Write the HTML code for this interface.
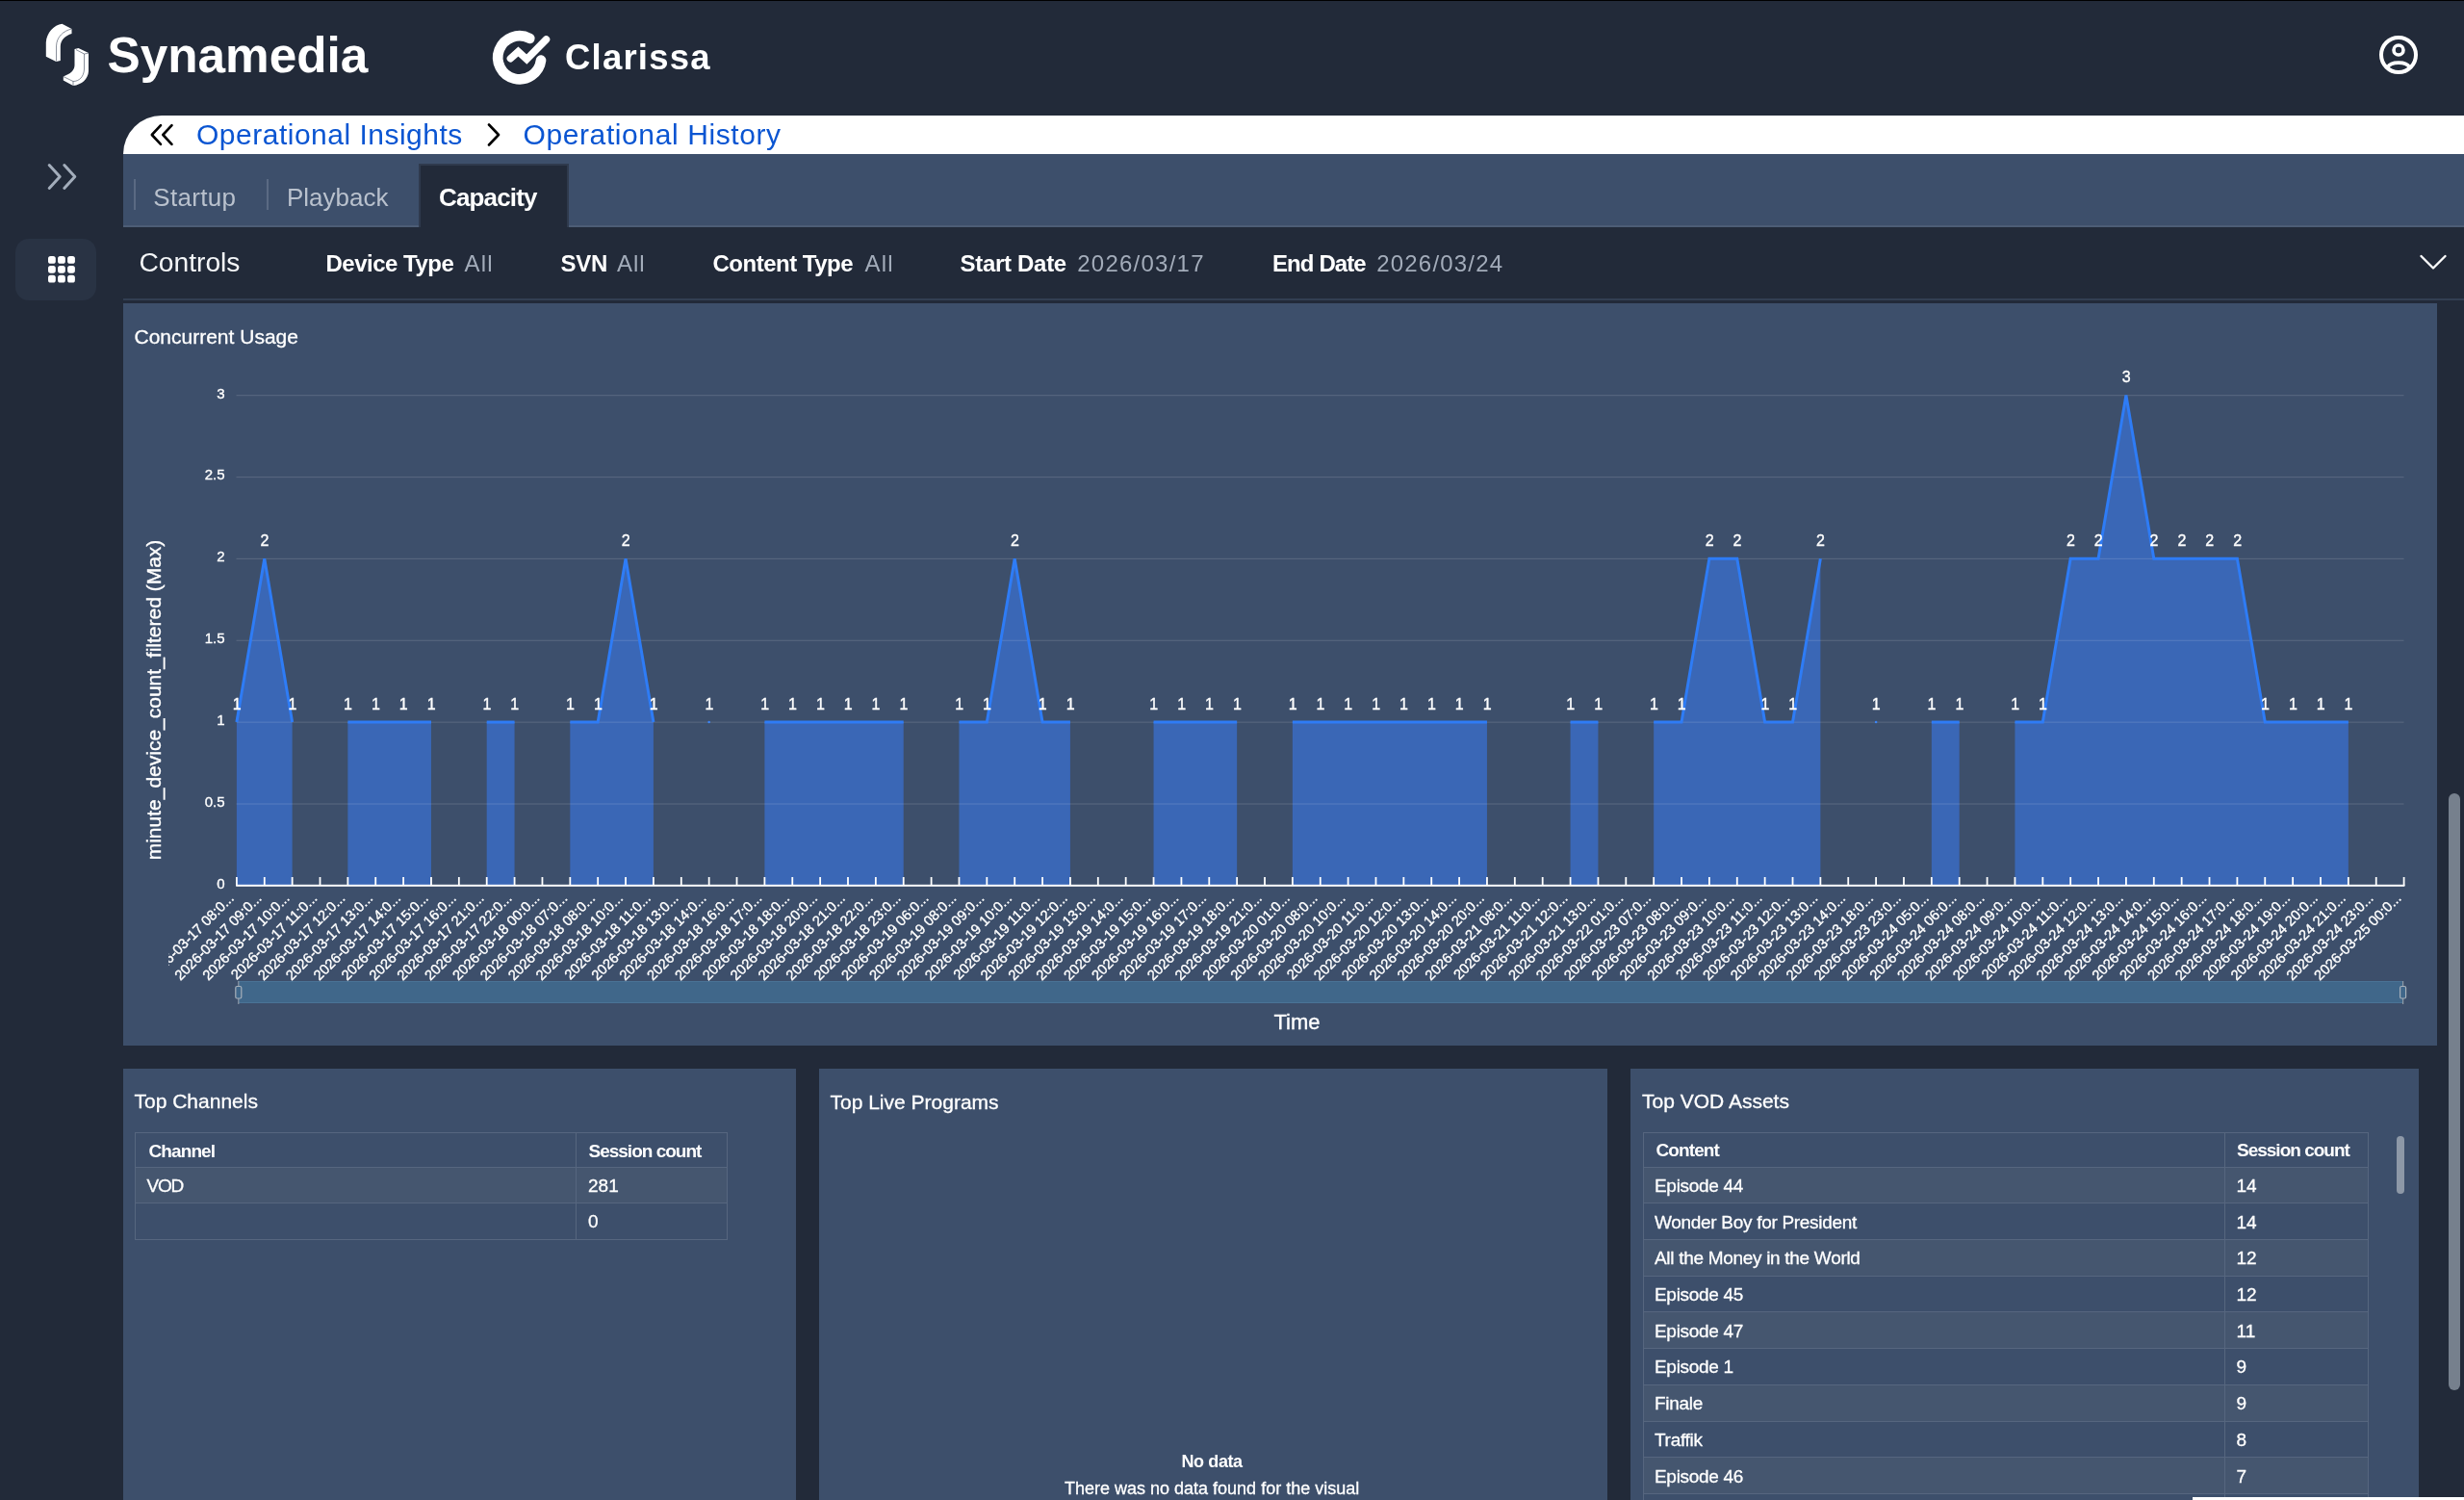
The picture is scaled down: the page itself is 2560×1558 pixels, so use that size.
<!DOCTYPE html>
<html><head><meta charset="utf-8"><title>Operational History</title>
<style>
html,body{margin:0;padding:0;}
body{width:2560px;height:1558px;overflow:hidden;position:relative;background:#222a39;font-family:"Liberation Sans",sans-serif;}
.r{position:absolute;}
.t{position:absolute;white-space:nowrap;line-height:1;}
.sk{-webkit-text-stroke:0.3px #fff;}
svg text{font-family:"Liberation Sans",sans-serif;}
.bt{stroke:#fff;stroke-width:0.35px;}
</style></head><body>
<div id="root" style="position:absolute;left:0;top:0;width:2560px;height:1558px;will-change:transform;">
<div class="r" style="left:0px;top:0px;width:2560px;height:1px;background:#000;"></div>
<svg class="r" style="left:0;top:0" width="130" height="110" viewBox="0 0 130 110">
<path d="M47.8,58.8 L47.8,44 C48.5,34 56,26 64.5,24.8 L74.5,30 L74.5,35 C68,37 63,41.5 62.8,48 L62.8,63 L58.3,64 Z" fill="#fff"/>
<path d="M58.5,63.5 L58.5,48 C58.8,38 66,32 74.5,30" fill="none" stroke="#3a4558" stroke-width="0.6"/>
<path d="M77.5,51 L81.5,50 L92,55 L92,74 C91.5,82 85,88 76,89 L65.8,83.5 L65.8,79.5 L71,77 C75,75 77.5,71.5 77.5,67.5 Z" fill="#fff"/>
<path d="M87.5,56 L87.5,72 C87,80 82,84.5 76,84.5 L65.8,79.5 M76,84.5 L76,89 M79,51.6 L87.5,56 L92,55.2" fill="none" stroke="#3a4558" stroke-width="0.6"/>
</svg>
<span class="t " style="left:111.50px;top:32.07px;font-size:51.3px;color:#fff;font-weight:bold;">Synamedia</span>
<svg class="r" style="left:500px;top:20px" width="80" height="80" viewBox="500 20 80 80">
<path d="M550.3,39.9 A22.5,22.5 0 1 0 562.06,62.65" fill="none" stroke="#fff" stroke-width="10.7" stroke-linecap="round"/>
<polyline points="530.4,60.7 538.4,53.6 547.2,61.6 567.5,41" fill="none" stroke="#fff" stroke-width="7.5" stroke-linecap="round" stroke-linejoin="miter"/>
</svg>
<span class="t " style="left:587.00px;top:42.10px;font-size:36.5px;color:#fff;font-weight:bold;letter-spacing:1.2px;">Clarissa</span>
<svg class="r" style="left:2466px;top:31px" width="52" height="52" viewBox="0 0 52 52">
<circle cx="26" cy="26" r="18" fill="none" stroke="#fff" stroke-width="4"/>
<circle cx="26" cy="21" r="5" fill="none" stroke="#fff" stroke-width="3.6"/>
<path d="M14.5,39 C18,32.5 34,32.5 37.5,39" fill="none" stroke="#fff" stroke-width="3.6"/>
</svg>
<svg class="r" style="left:40px;top:160px" width="50" height="50" viewBox="40 160 50 50">
<polyline points="51.2,171.6 62.2,183.5 51.2,195.4" fill="none" stroke="#a3adbb" stroke-width="3" stroke-linecap="round" stroke-linejoin="round"/>
<polyline points="66.8,171.6 77.8,183.5 66.8,195.4" fill="none" stroke="#a3adbb" stroke-width="3" stroke-linecap="round" stroke-linejoin="round"/>
</svg>
<div class="r" style="left:16px;top:248px;width:84px;height:64px;background:#293344;border-radius:14px;"></div>
<svg class="r" style="left:0;top:0" width="128" height="320" viewBox="0 0 128 320"><rect x="50.00" y="266.00" width="7.8" height="7.8" rx="2.6" fill="#fff"/><rect x="60.05" y="266.00" width="7.8" height="7.8" rx="2.6" fill="#fff"/><rect x="70.10" y="266.00" width="7.8" height="7.8" rx="2.6" fill="#fff"/><rect x="50.00" y="275.90" width="7.8" height="7.8" rx="2.6" fill="#fff"/><rect x="60.05" y="275.90" width="7.8" height="7.8" rx="2.6" fill="#fff"/><rect x="70.10" y="275.90" width="7.8" height="7.8" rx="2.6" fill="#fff"/><rect x="50.00" y="285.80" width="7.8" height="7.8" rx="2.6" fill="#fff"/><rect x="60.05" y="285.80" width="7.8" height="7.8" rx="2.6" fill="#fff"/><rect x="70.10" y="285.80" width="7.8" height="7.8" rx="2.6" fill="#fff"/></svg>
<div class="r" style="left:128px;top:120px;width:2432px;height:40px;background:#fff;border-top-left-radius:40px;"></div>
<svg class="r" style="left:150px;top:124px" width="40" height="32" viewBox="150 124 40 32">
<polyline points="167,130.2 157.8,140 167,149.8" fill="none" stroke="#000" stroke-width="2.6" stroke-linecap="round" stroke-linejoin="round"/>
<polyline points="178.5,130.2 169.3,140 178.5,149.8" fill="none" stroke="#000" stroke-width="2.6" stroke-linecap="round" stroke-linejoin="round"/>
</svg>
<span class="t " style="left:204.00px;top:125.41px;font-size:30px;color:#0a55d2;letter-spacing:0.5px;">Operational Insights</span>
<svg class="r" style="left:500px;top:124px" width="30" height="32" viewBox="500 124 30 32">
<polyline points="508,129.5 518,140 508,150.5" fill="none" stroke="#000" stroke-width="2.6" stroke-linecap="round" stroke-linejoin="round"/>
</svg>
<span class="t " style="left:543.50px;top:125.41px;font-size:30px;color:#0a55d2;letter-spacing:0.6px;">Operational History</span>
<div class="r" style="left:128px;top:160px;width:2432px;height:76px;background:#3d4f6b;"></div>
<div class="r" style="left:128px;top:234px;width:2432px;height:2px;background:#4d5d76;"></div>
<div class="r" style="left:139px;top:186px;width:2px;height:32px;background:#5a6a83;"></div>
<div class="r" style="left:277px;top:186px;width:2px;height:32px;background:#5a6a83;"></div>
<span class="t " style="left:159.30px;top:191.99px;font-size:26px;color:#b9c1cd;letter-spacing:0.3px;">Startup</span>
<span class="t " style="left:298.00px;top:191.99px;font-size:26px;color:#b9c1cd;">Playback</span>
<div class="r" style="left:435px;top:170px;width:156px;height:66px;background:#222a39;box-shadow: inset 2px 2px 0 #2f3a4d, inset -2px 0 0 #2f3a4d;"></div>
<span class="t " style="left:456.00px;top:191.99px;font-size:26px;color:#fff;font-weight:bold;letter-spacing:-0.85px;">Capacity</span>
<div class="r" style="left:128px;top:236px;width:2432px;height:74px;background:#222a39;"></div>
<div class="r" style="left:128px;top:310px;width:2432px;height:2px;background:#323e52;"></div>
<span class="t " style="left:144.50px;top:258.43px;font-size:28.2px;color:#f4f6f8;">Controls</span>
<span class="t " style="left:338.50px;top:261.68px;font-size:24px;color:#fff;font-weight:bold;letter-spacing:-0.5px;">Device Type</span>
<span class="t " style="left:482.50px;top:261.68px;font-size:24px;color:#a3acba;letter-spacing:1.2px;">All</span>
<span class="t " style="left:582.50px;top:261.68px;font-size:24px;color:#fff;font-weight:bold;letter-spacing:-0.3px;">SVN</span>
<span class="t " style="left:641.00px;top:261.68px;font-size:24px;color:#a3acba;letter-spacing:1.0px;">All</span>
<span class="t " style="left:740.50px;top:261.68px;font-size:24px;color:#fff;font-weight:bold;letter-spacing:-0.5px;">Content Type</span>
<span class="t " style="left:898.50px;top:261.68px;font-size:24px;color:#a3acba;letter-spacing:1.2px;">All</span>
<span class="t " style="left:997.50px;top:261.68px;font-size:24px;color:#fff;font-weight:bold;letter-spacing:-0.3px;">Start Date</span>
<span class="t " style="left:1119.20px;top:261.68px;font-size:24px;color:#a3acba;letter-spacing:1.25px;">2026/03/17</span>
<span class="t " style="left:1322.00px;top:261.68px;font-size:24px;color:#fff;font-weight:bold;letter-spacing:-0.9px;">End Date</span>
<span class="t " style="left:1430.20px;top:261.68px;font-size:24px;color:#a3acba;letter-spacing:1.2px;">2026/03/24</span>
<svg class="r" style="left:2505px;top:255px" width="45" height="35" viewBox="2505 255 45 35">
<polyline points="2515.5,266 2528,278.5 2540.5,266" fill="none" stroke="#fff" stroke-width="2.3" stroke-linecap="round" stroke-linejoin="round"/>
</svg>
<div class="r" style="left:2544px;top:824px;width:12px;height:620px;background:#76808d;border-radius:6px;"></div>
<div class="r" style="left:128px;top:315px;width:2404px;height:771px;background:#3d4f6b;"></div>
<span class="t sk" style="left:139.50px;top:339.22px;font-size:21px;color:#fff;">Concurrent Usage</span>
<svg class="r" style="left:0;top:0" width="2560" height="1100" viewBox="0 0 2560 1100">
<defs><clipPath id="lc"><rect x="175" y="920" width="2400" height="120"/></clipPath></defs>
<text x="233.5" y="922.80" text-anchor="end" font-size="15" fill="#fff" class="bt">0</text>
<text x="233.5" y="837.92" text-anchor="end" font-size="15" fill="#fff" class="bt">0.5</text>
<text x="233.5" y="753.05" text-anchor="end" font-size="15" fill="#fff" class="bt">1</text>
<text x="233.5" y="668.17" text-anchor="end" font-size="15" fill="#fff" class="bt">1.5</text>
<text x="233.5" y="583.30" text-anchor="end" font-size="15" fill="#fff" class="bt">2</text>
<text x="233.5" y="498.42" text-anchor="end" font-size="15" fill="#fff" class="bt">2.5</text>
<text x="233.5" y="413.55" text-anchor="end" font-size="15" fill="#fff" class="bt">3</text>
<text transform="translate(166.5 727) rotate(-90)" text-anchor="middle" font-size="21" fill="#fff" class="bt">minute_device_count_filtered (Max)</text>
<polygon points="245.90,919.80 245.90,750.05 274.77,580.30 303.64,750.05 303.64,919.80" fill="#3a67b6"/>
<polygon points="361.37,919.80 361.37,750.05 390.24,750.05 419.11,750.05 447.98,750.05 447.98,919.80" fill="#3a67b6"/>
<polygon points="505.71,919.80 505.71,750.05 534.58,750.05 534.58,919.80" fill="#3a67b6"/>
<polygon points="592.32,919.80 592.32,750.05 621.18,750.05 650.05,580.30 678.92,750.05 678.92,919.80" fill="#3a67b6"/>
<circle cx="736.66" cy="750.05" r="1.3" fill="#2e7cf6"/>
<polygon points="794.39,919.80 794.39,750.05 823.26,750.05 852.13,750.05 880.99,750.05 909.86,750.05 938.73,750.05 938.73,919.80" fill="#3a67b6"/>
<polygon points="996.47,919.80 996.47,750.05 1025.33,750.05 1054.20,580.30 1083.07,750.05 1111.94,750.05 1111.94,919.80" fill="#3a67b6"/>
<polygon points="1198.54,919.80 1198.54,750.05 1227.41,750.05 1256.28,750.05 1285.15,750.05 1285.15,919.80" fill="#3a67b6"/>
<polygon points="1342.88,919.80 1342.88,750.05 1371.75,750.05 1400.62,750.05 1429.49,750.05 1458.35,750.05 1487.22,750.05 1516.09,750.05 1544.96,750.05 1544.96,919.80" fill="#3a67b6"/>
<polygon points="1631.56,919.80 1631.56,750.05 1660.43,750.05 1660.43,919.80" fill="#3a67b6"/>
<polygon points="1718.17,919.80 1718.17,750.05 1747.03,750.05 1775.90,580.30 1804.77,580.30 1833.64,750.05 1862.51,750.05 1891.37,580.30 1891.37,919.80" fill="#3a67b6"/>
<circle cx="1949.11" cy="750.05" r="1.3" fill="#2e7cf6"/>
<polygon points="2006.84,919.80 2006.84,750.05 2035.71,750.05 2035.71,919.80" fill="#3a67b6"/>
<polygon points="2093.45,919.80 2093.45,750.05 2122.32,750.05 2151.18,580.30 2180.05,580.30 2208.92,410.55 2237.79,580.30 2266.66,580.30 2295.52,580.30 2324.39,580.30 2353.26,750.05 2382.13,750.05 2411.00,750.05 2439.86,750.05 2439.86,919.80" fill="#3a67b6"/>
<rect x="245.5" y="834.42" width="2252" height="1.2" fill="#fff" fill-opacity="0.13"/>
<rect x="245.5" y="749.55" width="2252" height="1.2" fill="#fff" fill-opacity="0.13"/>
<rect x="245.5" y="664.67" width="2252" height="1.2" fill="#fff" fill-opacity="0.13"/>
<rect x="245.5" y="579.80" width="2252" height="1.2" fill="#fff" fill-opacity="0.13"/>
<rect x="245.5" y="494.92" width="2252" height="1.2" fill="#fff" fill-opacity="0.13"/>
<rect x="245.5" y="410.05" width="2252" height="1.2" fill="#fff" fill-opacity="0.13"/>
<polyline points="245.90,750.05 274.77,580.30 303.64,750.05" fill="none" stroke="#2e7cf6" stroke-width="3" stroke-linejoin="miter"/>
<polyline points="361.37,750.05 390.24,750.05 419.11,750.05 447.98,750.05" fill="none" stroke="#2e7cf6" stroke-width="3" stroke-linejoin="miter"/>
<polyline points="505.71,750.05 534.58,750.05" fill="none" stroke="#2e7cf6" stroke-width="3" stroke-linejoin="miter"/>
<polyline points="592.32,750.05 621.18,750.05 650.05,580.30 678.92,750.05" fill="none" stroke="#2e7cf6" stroke-width="3" stroke-linejoin="miter"/>
<polyline points="794.39,750.05 823.26,750.05 852.13,750.05 880.99,750.05 909.86,750.05 938.73,750.05" fill="none" stroke="#2e7cf6" stroke-width="3" stroke-linejoin="miter"/>
<polyline points="996.47,750.05 1025.33,750.05 1054.20,580.30 1083.07,750.05 1111.94,750.05" fill="none" stroke="#2e7cf6" stroke-width="3" stroke-linejoin="miter"/>
<polyline points="1198.54,750.05 1227.41,750.05 1256.28,750.05 1285.15,750.05" fill="none" stroke="#2e7cf6" stroke-width="3" stroke-linejoin="miter"/>
<polyline points="1342.88,750.05 1371.75,750.05 1400.62,750.05 1429.49,750.05 1458.35,750.05 1487.22,750.05 1516.09,750.05 1544.96,750.05" fill="none" stroke="#2e7cf6" stroke-width="3" stroke-linejoin="miter"/>
<polyline points="1631.56,750.05 1660.43,750.05" fill="none" stroke="#2e7cf6" stroke-width="3" stroke-linejoin="miter"/>
<polyline points="1718.17,750.05 1747.03,750.05 1775.90,580.30 1804.77,580.30 1833.64,750.05 1862.51,750.05 1891.37,580.30" fill="none" stroke="#2e7cf6" stroke-width="3" stroke-linejoin="miter"/>
<polyline points="2006.84,750.05 2035.71,750.05" fill="none" stroke="#2e7cf6" stroke-width="3" stroke-linejoin="miter"/>
<polyline points="2093.45,750.05 2122.32,750.05 2151.18,580.30 2180.05,580.30 2208.92,410.55 2237.79,580.30 2266.66,580.30 2295.52,580.30 2324.39,580.30 2353.26,750.05 2382.13,750.05 2411.00,750.05 2439.86,750.05" fill="none" stroke="#2e7cf6" stroke-width="3" stroke-linejoin="miter"/>
<rect x="245.2" y="918.8" width="2253.2" height="2" fill="#fff"/>
<rect x="245.00" y="911" width="1.8" height="9" fill="#fff"/>
<rect x="273.87" y="911" width="1.8" height="9" fill="#fff"/>
<rect x="302.74" y="911" width="1.8" height="9" fill="#fff"/>
<rect x="331.60" y="911" width="1.8" height="9" fill="#fff"/>
<rect x="360.47" y="911" width="1.8" height="9" fill="#fff"/>
<rect x="389.34" y="911" width="1.8" height="9" fill="#fff"/>
<rect x="418.21" y="911" width="1.8" height="9" fill="#fff"/>
<rect x="447.08" y="911" width="1.8" height="9" fill="#fff"/>
<rect x="475.94" y="911" width="1.8" height="9" fill="#fff"/>
<rect x="504.81" y="911" width="1.8" height="9" fill="#fff"/>
<rect x="533.68" y="911" width="1.8" height="9" fill="#fff"/>
<rect x="562.55" y="911" width="1.8" height="9" fill="#fff"/>
<rect x="591.42" y="911" width="1.8" height="9" fill="#fff"/>
<rect x="620.28" y="911" width="1.8" height="9" fill="#fff"/>
<rect x="649.15" y="911" width="1.8" height="9" fill="#fff"/>
<rect x="678.02" y="911" width="1.8" height="9" fill="#fff"/>
<rect x="706.89" y="911" width="1.8" height="9" fill="#fff"/>
<rect x="735.76" y="911" width="1.8" height="9" fill="#fff"/>
<rect x="764.62" y="911" width="1.8" height="9" fill="#fff"/>
<rect x="793.49" y="911" width="1.8" height="9" fill="#fff"/>
<rect x="822.36" y="911" width="1.8" height="9" fill="#fff"/>
<rect x="851.23" y="911" width="1.8" height="9" fill="#fff"/>
<rect x="880.09" y="911" width="1.8" height="9" fill="#fff"/>
<rect x="908.96" y="911" width="1.8" height="9" fill="#fff"/>
<rect x="937.83" y="911" width="1.8" height="9" fill="#fff"/>
<rect x="966.70" y="911" width="1.8" height="9" fill="#fff"/>
<rect x="995.57" y="911" width="1.8" height="9" fill="#fff"/>
<rect x="1024.43" y="911" width="1.8" height="9" fill="#fff"/>
<rect x="1053.30" y="911" width="1.8" height="9" fill="#fff"/>
<rect x="1082.17" y="911" width="1.8" height="9" fill="#fff"/>
<rect x="1111.04" y="911" width="1.8" height="9" fill="#fff"/>
<rect x="1139.91" y="911" width="1.8" height="9" fill="#fff"/>
<rect x="1168.77" y="911" width="1.8" height="9" fill="#fff"/>
<rect x="1197.64" y="911" width="1.8" height="9" fill="#fff"/>
<rect x="1226.51" y="911" width="1.8" height="9" fill="#fff"/>
<rect x="1255.38" y="911" width="1.8" height="9" fill="#fff"/>
<rect x="1284.25" y="911" width="1.8" height="9" fill="#fff"/>
<rect x="1313.11" y="911" width="1.8" height="9" fill="#fff"/>
<rect x="1341.98" y="911" width="1.8" height="9" fill="#fff"/>
<rect x="1370.85" y="911" width="1.8" height="9" fill="#fff"/>
<rect x="1399.72" y="911" width="1.8" height="9" fill="#fff"/>
<rect x="1428.59" y="911" width="1.8" height="9" fill="#fff"/>
<rect x="1457.45" y="911" width="1.8" height="9" fill="#fff"/>
<rect x="1486.32" y="911" width="1.8" height="9" fill="#fff"/>
<rect x="1515.19" y="911" width="1.8" height="9" fill="#fff"/>
<rect x="1544.06" y="911" width="1.8" height="9" fill="#fff"/>
<rect x="1572.93" y="911" width="1.8" height="9" fill="#fff"/>
<rect x="1601.79" y="911" width="1.8" height="9" fill="#fff"/>
<rect x="1630.66" y="911" width="1.8" height="9" fill="#fff"/>
<rect x="1659.53" y="911" width="1.8" height="9" fill="#fff"/>
<rect x="1688.40" y="911" width="1.8" height="9" fill="#fff"/>
<rect x="1717.27" y="911" width="1.8" height="9" fill="#fff"/>
<rect x="1746.13" y="911" width="1.8" height="9" fill="#fff"/>
<rect x="1775.00" y="911" width="1.8" height="9" fill="#fff"/>
<rect x="1803.87" y="911" width="1.8" height="9" fill="#fff"/>
<rect x="1832.74" y="911" width="1.8" height="9" fill="#fff"/>
<rect x="1861.61" y="911" width="1.8" height="9" fill="#fff"/>
<rect x="1890.47" y="911" width="1.8" height="9" fill="#fff"/>
<rect x="1919.34" y="911" width="1.8" height="9" fill="#fff"/>
<rect x="1948.21" y="911" width="1.8" height="9" fill="#fff"/>
<rect x="1977.08" y="911" width="1.8" height="9" fill="#fff"/>
<rect x="2005.94" y="911" width="1.8" height="9" fill="#fff"/>
<rect x="2034.81" y="911" width="1.8" height="9" fill="#fff"/>
<rect x="2063.68" y="911" width="1.8" height="9" fill="#fff"/>
<rect x="2092.55" y="911" width="1.8" height="9" fill="#fff"/>
<rect x="2121.42" y="911" width="1.8" height="9" fill="#fff"/>
<rect x="2150.28" y="911" width="1.8" height="9" fill="#fff"/>
<rect x="2179.15" y="911" width="1.8" height="9" fill="#fff"/>
<rect x="2208.02" y="911" width="1.8" height="9" fill="#fff"/>
<rect x="2236.89" y="911" width="1.8" height="9" fill="#fff"/>
<rect x="2265.76" y="911" width="1.8" height="9" fill="#fff"/>
<rect x="2294.62" y="911" width="1.8" height="9" fill="#fff"/>
<rect x="2323.49" y="911" width="1.8" height="9" fill="#fff"/>
<rect x="2352.36" y="911" width="1.8" height="9" fill="#fff"/>
<rect x="2381.23" y="911" width="1.8" height="9" fill="#fff"/>
<rect x="2410.10" y="911" width="1.8" height="9" fill="#fff"/>
<rect x="2438.96" y="911" width="1.8" height="9" fill="#fff"/>
<rect x="2467.83" y="911" width="1.8" height="9" fill="#fff"/>
<rect x="2496.70" y="911" width="1.8" height="9" fill="#fff"/>
<text x="246.10" y="736.85" text-anchor="middle" font-size="16" fill="#fff" class="bt">1</text>
<text x="274.97" y="567.10" text-anchor="middle" font-size="16" fill="#fff" class="bt">2</text>
<text x="303.84" y="736.85" text-anchor="middle" font-size="16" fill="#fff" class="bt">1</text>
<text x="361.57" y="736.85" text-anchor="middle" font-size="16" fill="#fff" class="bt">1</text>
<text x="390.44" y="736.85" text-anchor="middle" font-size="16" fill="#fff" class="bt">1</text>
<text x="419.31" y="736.85" text-anchor="middle" font-size="16" fill="#fff" class="bt">1</text>
<text x="448.18" y="736.85" text-anchor="middle" font-size="16" fill="#fff" class="bt">1</text>
<text x="505.91" y="736.85" text-anchor="middle" font-size="16" fill="#fff" class="bt">1</text>
<text x="534.78" y="736.85" text-anchor="middle" font-size="16" fill="#fff" class="bt">1</text>
<text x="592.52" y="736.85" text-anchor="middle" font-size="16" fill="#fff" class="bt">1</text>
<text x="621.38" y="736.85" text-anchor="middle" font-size="16" fill="#fff" class="bt">1</text>
<text x="650.25" y="567.10" text-anchor="middle" font-size="16" fill="#fff" class="bt">2</text>
<text x="679.12" y="736.85" text-anchor="middle" font-size="16" fill="#fff" class="bt">1</text>
<text x="736.86" y="736.85" text-anchor="middle" font-size="16" fill="#fff" class="bt">1</text>
<text x="794.59" y="736.85" text-anchor="middle" font-size="16" fill="#fff" class="bt">1</text>
<text x="823.46" y="736.85" text-anchor="middle" font-size="16" fill="#fff" class="bt">1</text>
<text x="852.33" y="736.85" text-anchor="middle" font-size="16" fill="#fff" class="bt">1</text>
<text x="881.19" y="736.85" text-anchor="middle" font-size="16" fill="#fff" class="bt">1</text>
<text x="910.06" y="736.85" text-anchor="middle" font-size="16" fill="#fff" class="bt">1</text>
<text x="938.93" y="736.85" text-anchor="middle" font-size="16" fill="#fff" class="bt">1</text>
<text x="996.67" y="736.85" text-anchor="middle" font-size="16" fill="#fff" class="bt">1</text>
<text x="1025.53" y="736.85" text-anchor="middle" font-size="16" fill="#fff" class="bt">1</text>
<text x="1054.40" y="567.10" text-anchor="middle" font-size="16" fill="#fff" class="bt">2</text>
<text x="1083.27" y="736.85" text-anchor="middle" font-size="16" fill="#fff" class="bt">1</text>
<text x="1112.14" y="736.85" text-anchor="middle" font-size="16" fill="#fff" class="bt">1</text>
<text x="1198.74" y="736.85" text-anchor="middle" font-size="16" fill="#fff" class="bt">1</text>
<text x="1227.61" y="736.85" text-anchor="middle" font-size="16" fill="#fff" class="bt">1</text>
<text x="1256.48" y="736.85" text-anchor="middle" font-size="16" fill="#fff" class="bt">1</text>
<text x="1285.35" y="736.85" text-anchor="middle" font-size="16" fill="#fff" class="bt">1</text>
<text x="1343.08" y="736.85" text-anchor="middle" font-size="16" fill="#fff" class="bt">1</text>
<text x="1371.95" y="736.85" text-anchor="middle" font-size="16" fill="#fff" class="bt">1</text>
<text x="1400.82" y="736.85" text-anchor="middle" font-size="16" fill="#fff" class="bt">1</text>
<text x="1429.69" y="736.85" text-anchor="middle" font-size="16" fill="#fff" class="bt">1</text>
<text x="1458.55" y="736.85" text-anchor="middle" font-size="16" fill="#fff" class="bt">1</text>
<text x="1487.42" y="736.85" text-anchor="middle" font-size="16" fill="#fff" class="bt">1</text>
<text x="1516.29" y="736.85" text-anchor="middle" font-size="16" fill="#fff" class="bt">1</text>
<text x="1545.16" y="736.85" text-anchor="middle" font-size="16" fill="#fff" class="bt">1</text>
<text x="1631.76" y="736.85" text-anchor="middle" font-size="16" fill="#fff" class="bt">1</text>
<text x="1660.63" y="736.85" text-anchor="middle" font-size="16" fill="#fff" class="bt">1</text>
<text x="1718.37" y="736.85" text-anchor="middle" font-size="16" fill="#fff" class="bt">1</text>
<text x="1747.23" y="736.85" text-anchor="middle" font-size="16" fill="#fff" class="bt">1</text>
<text x="1776.10" y="567.10" text-anchor="middle" font-size="16" fill="#fff" class="bt">2</text>
<text x="1804.97" y="567.10" text-anchor="middle" font-size="16" fill="#fff" class="bt">2</text>
<text x="1833.84" y="736.85" text-anchor="middle" font-size="16" fill="#fff" class="bt">1</text>
<text x="1862.71" y="736.85" text-anchor="middle" font-size="16" fill="#fff" class="bt">1</text>
<text x="1891.57" y="567.10" text-anchor="middle" font-size="16" fill="#fff" class="bt">2</text>
<text x="1949.31" y="736.85" text-anchor="middle" font-size="16" fill="#fff" class="bt">1</text>
<text x="2007.04" y="736.85" text-anchor="middle" font-size="16" fill="#fff" class="bt">1</text>
<text x="2035.91" y="736.85" text-anchor="middle" font-size="16" fill="#fff" class="bt">1</text>
<text x="2093.65" y="736.85" text-anchor="middle" font-size="16" fill="#fff" class="bt">1</text>
<text x="2122.52" y="736.85" text-anchor="middle" font-size="16" fill="#fff" class="bt">1</text>
<text x="2151.38" y="567.10" text-anchor="middle" font-size="16" fill="#fff" class="bt">2</text>
<text x="2180.25" y="567.10" text-anchor="middle" font-size="16" fill="#fff" class="bt">2</text>
<text x="2209.12" y="397.35" text-anchor="middle" font-size="16" fill="#fff" class="bt">3</text>
<text x="2237.99" y="567.10" text-anchor="middle" font-size="16" fill="#fff" class="bt">2</text>
<text x="2266.86" y="567.10" text-anchor="middle" font-size="16" fill="#fff" class="bt">2</text>
<text x="2295.72" y="567.10" text-anchor="middle" font-size="16" fill="#fff" class="bt">2</text>
<text x="2324.59" y="567.10" text-anchor="middle" font-size="16" fill="#fff" class="bt">2</text>
<text x="2353.46" y="736.85" text-anchor="middle" font-size="16" fill="#fff" class="bt">1</text>
<text x="2382.33" y="736.85" text-anchor="middle" font-size="16" fill="#fff" class="bt">1</text>
<text x="2411.20" y="736.85" text-anchor="middle" font-size="16" fill="#fff" class="bt">1</text>
<text x="2440.06" y="736.85" text-anchor="middle" font-size="16" fill="#fff" class="bt">1</text>
<g clip-path="url(#lc)">
<text x="243.90" y="933.80" text-anchor="end" font-size="14.75" fill="#fff" class="bt" transform="rotate(-45 243.90 933.80)">2026-03-17 08:0...</text>
<text x="272.77" y="933.80" text-anchor="end" font-size="14.75" fill="#fff" class="bt" transform="rotate(-45 272.77 933.80)">2026-03-17 09:0...</text>
<text x="301.64" y="933.80" text-anchor="end" font-size="14.75" fill="#fff" class="bt" transform="rotate(-45 301.64 933.80)">2026-03-17 10:0...</text>
<text x="330.50" y="933.80" text-anchor="end" font-size="14.75" fill="#fff" class="bt" transform="rotate(-45 330.50 933.80)">2026-03-17 11:0...</text>
<text x="359.37" y="933.80" text-anchor="end" font-size="14.75" fill="#fff" class="bt" transform="rotate(-45 359.37 933.80)">2026-03-17 12:0...</text>
<text x="388.24" y="933.80" text-anchor="end" font-size="14.75" fill="#fff" class="bt" transform="rotate(-45 388.24 933.80)">2026-03-17 13:0...</text>
<text x="417.11" y="933.80" text-anchor="end" font-size="14.75" fill="#fff" class="bt" transform="rotate(-45 417.11 933.80)">2026-03-17 14:0...</text>
<text x="445.98" y="933.80" text-anchor="end" font-size="14.75" fill="#fff" class="bt" transform="rotate(-45 445.98 933.80)">2026-03-17 15:0...</text>
<text x="474.84" y="933.80" text-anchor="end" font-size="14.75" fill="#fff" class="bt" transform="rotate(-45 474.84 933.80)">2026-03-17 16:0...</text>
<text x="503.71" y="933.80" text-anchor="end" font-size="14.75" fill="#fff" class="bt" transform="rotate(-45 503.71 933.80)">2026-03-17 21:0...</text>
<text x="532.58" y="933.80" text-anchor="end" font-size="14.75" fill="#fff" class="bt" transform="rotate(-45 532.58 933.80)">2026-03-17 22:0...</text>
<text x="561.45" y="933.80" text-anchor="end" font-size="14.75" fill="#fff" class="bt" transform="rotate(-45 561.45 933.80)">2026-03-18 00:0...</text>
<text x="590.32" y="933.80" text-anchor="end" font-size="14.75" fill="#fff" class="bt" transform="rotate(-45 590.32 933.80)">2026-03-18 07:0...</text>
<text x="619.18" y="933.80" text-anchor="end" font-size="14.75" fill="#fff" class="bt" transform="rotate(-45 619.18 933.80)">2026-03-18 08:0...</text>
<text x="648.05" y="933.80" text-anchor="end" font-size="14.75" fill="#fff" class="bt" transform="rotate(-45 648.05 933.80)">2026-03-18 10:0...</text>
<text x="676.92" y="933.80" text-anchor="end" font-size="14.75" fill="#fff" class="bt" transform="rotate(-45 676.92 933.80)">2026-03-18 11:0...</text>
<text x="705.79" y="933.80" text-anchor="end" font-size="14.75" fill="#fff" class="bt" transform="rotate(-45 705.79 933.80)">2026-03-18 13:0...</text>
<text x="734.66" y="933.80" text-anchor="end" font-size="14.75" fill="#fff" class="bt" transform="rotate(-45 734.66 933.80)">2026-03-18 14:0...</text>
<text x="763.52" y="933.80" text-anchor="end" font-size="14.75" fill="#fff" class="bt" transform="rotate(-45 763.52 933.80)">2026-03-18 16:0...</text>
<text x="792.39" y="933.80" text-anchor="end" font-size="14.75" fill="#fff" class="bt" transform="rotate(-45 792.39 933.80)">2026-03-18 17:0...</text>
<text x="821.26" y="933.80" text-anchor="end" font-size="14.75" fill="#fff" class="bt" transform="rotate(-45 821.26 933.80)">2026-03-18 18:0...</text>
<text x="850.13" y="933.80" text-anchor="end" font-size="14.75" fill="#fff" class="bt" transform="rotate(-45 850.13 933.80)">2026-03-18 20:0...</text>
<text x="878.99" y="933.80" text-anchor="end" font-size="14.75" fill="#fff" class="bt" transform="rotate(-45 878.99 933.80)">2026-03-18 21:0...</text>
<text x="907.86" y="933.80" text-anchor="end" font-size="14.75" fill="#fff" class="bt" transform="rotate(-45 907.86 933.80)">2026-03-18 22:0...</text>
<text x="936.73" y="933.80" text-anchor="end" font-size="14.75" fill="#fff" class="bt" transform="rotate(-45 936.73 933.80)">2026-03-18 23:0...</text>
<text x="965.60" y="933.80" text-anchor="end" font-size="14.75" fill="#fff" class="bt" transform="rotate(-45 965.60 933.80)">2026-03-19 06:0...</text>
<text x="994.47" y="933.80" text-anchor="end" font-size="14.75" fill="#fff" class="bt" transform="rotate(-45 994.47 933.80)">2026-03-19 08:0...</text>
<text x="1023.33" y="933.80" text-anchor="end" font-size="14.75" fill="#fff" class="bt" transform="rotate(-45 1023.33 933.80)">2026-03-19 09:0...</text>
<text x="1052.20" y="933.80" text-anchor="end" font-size="14.75" fill="#fff" class="bt" transform="rotate(-45 1052.20 933.80)">2026-03-19 10:0...</text>
<text x="1081.07" y="933.80" text-anchor="end" font-size="14.75" fill="#fff" class="bt" transform="rotate(-45 1081.07 933.80)">2026-03-19 11:0...</text>
<text x="1109.94" y="933.80" text-anchor="end" font-size="14.75" fill="#fff" class="bt" transform="rotate(-45 1109.94 933.80)">2026-03-19 12:0...</text>
<text x="1138.81" y="933.80" text-anchor="end" font-size="14.75" fill="#fff" class="bt" transform="rotate(-45 1138.81 933.80)">2026-03-19 13:0...</text>
<text x="1167.67" y="933.80" text-anchor="end" font-size="14.75" fill="#fff" class="bt" transform="rotate(-45 1167.67 933.80)">2026-03-19 14:0...</text>
<text x="1196.54" y="933.80" text-anchor="end" font-size="14.75" fill="#fff" class="bt" transform="rotate(-45 1196.54 933.80)">2026-03-19 15:0...</text>
<text x="1225.41" y="933.80" text-anchor="end" font-size="14.75" fill="#fff" class="bt" transform="rotate(-45 1225.41 933.80)">2026-03-19 16:0...</text>
<text x="1254.28" y="933.80" text-anchor="end" font-size="14.75" fill="#fff" class="bt" transform="rotate(-45 1254.28 933.80)">2026-03-19 17:0...</text>
<text x="1283.15" y="933.80" text-anchor="end" font-size="14.75" fill="#fff" class="bt" transform="rotate(-45 1283.15 933.80)">2026-03-19 18:0...</text>
<text x="1312.01" y="933.80" text-anchor="end" font-size="14.75" fill="#fff" class="bt" transform="rotate(-45 1312.01 933.80)">2026-03-19 21:0...</text>
<text x="1340.88" y="933.80" text-anchor="end" font-size="14.75" fill="#fff" class="bt" transform="rotate(-45 1340.88 933.80)">2026-03-20 01:0...</text>
<text x="1369.75" y="933.80" text-anchor="end" font-size="14.75" fill="#fff" class="bt" transform="rotate(-45 1369.75 933.80)">2026-03-20 08:0...</text>
<text x="1398.62" y="933.80" text-anchor="end" font-size="14.75" fill="#fff" class="bt" transform="rotate(-45 1398.62 933.80)">2026-03-20 10:0...</text>
<text x="1427.49" y="933.80" text-anchor="end" font-size="14.75" fill="#fff" class="bt" transform="rotate(-45 1427.49 933.80)">2026-03-20 11:0...</text>
<text x="1456.35" y="933.80" text-anchor="end" font-size="14.75" fill="#fff" class="bt" transform="rotate(-45 1456.35 933.80)">2026-03-20 12:0...</text>
<text x="1485.22" y="933.80" text-anchor="end" font-size="14.75" fill="#fff" class="bt" transform="rotate(-45 1485.22 933.80)">2026-03-20 13:0...</text>
<text x="1514.09" y="933.80" text-anchor="end" font-size="14.75" fill="#fff" class="bt" transform="rotate(-45 1514.09 933.80)">2026-03-20 14:0...</text>
<text x="1542.96" y="933.80" text-anchor="end" font-size="14.75" fill="#fff" class="bt" transform="rotate(-45 1542.96 933.80)">2026-03-20 20:0...</text>
<text x="1571.83" y="933.80" text-anchor="end" font-size="14.75" fill="#fff" class="bt" transform="rotate(-45 1571.83 933.80)">2026-03-21 08:0...</text>
<text x="1600.69" y="933.80" text-anchor="end" font-size="14.75" fill="#fff" class="bt" transform="rotate(-45 1600.69 933.80)">2026-03-21 11:0...</text>
<text x="1629.56" y="933.80" text-anchor="end" font-size="14.75" fill="#fff" class="bt" transform="rotate(-45 1629.56 933.80)">2026-03-21 12:0...</text>
<text x="1658.43" y="933.80" text-anchor="end" font-size="14.75" fill="#fff" class="bt" transform="rotate(-45 1658.43 933.80)">2026-03-21 13:0...</text>
<text x="1687.30" y="933.80" text-anchor="end" font-size="14.75" fill="#fff" class="bt" transform="rotate(-45 1687.30 933.80)">2026-03-22 01:0...</text>
<text x="1716.17" y="933.80" text-anchor="end" font-size="14.75" fill="#fff" class="bt" transform="rotate(-45 1716.17 933.80)">2026-03-23 07:0...</text>
<text x="1745.03" y="933.80" text-anchor="end" font-size="14.75" fill="#fff" class="bt" transform="rotate(-45 1745.03 933.80)">2026-03-23 08:0...</text>
<text x="1773.90" y="933.80" text-anchor="end" font-size="14.75" fill="#fff" class="bt" transform="rotate(-45 1773.90 933.80)">2026-03-23 09:0...</text>
<text x="1802.77" y="933.80" text-anchor="end" font-size="14.75" fill="#fff" class="bt" transform="rotate(-45 1802.77 933.80)">2026-03-23 10:0...</text>
<text x="1831.64" y="933.80" text-anchor="end" font-size="14.75" fill="#fff" class="bt" transform="rotate(-45 1831.64 933.80)">2026-03-23 11:0...</text>
<text x="1860.51" y="933.80" text-anchor="end" font-size="14.75" fill="#fff" class="bt" transform="rotate(-45 1860.51 933.80)">2026-03-23 12:0...</text>
<text x="1889.37" y="933.80" text-anchor="end" font-size="14.75" fill="#fff" class="bt" transform="rotate(-45 1889.37 933.80)">2026-03-23 13:0...</text>
<text x="1918.24" y="933.80" text-anchor="end" font-size="14.75" fill="#fff" class="bt" transform="rotate(-45 1918.24 933.80)">2026-03-23 14:0...</text>
<text x="1947.11" y="933.80" text-anchor="end" font-size="14.75" fill="#fff" class="bt" transform="rotate(-45 1947.11 933.80)">2026-03-23 18:0...</text>
<text x="1975.98" y="933.80" text-anchor="end" font-size="14.75" fill="#fff" class="bt" transform="rotate(-45 1975.98 933.80)">2026-03-23 23:0...</text>
<text x="2004.84" y="933.80" text-anchor="end" font-size="14.75" fill="#fff" class="bt" transform="rotate(-45 2004.84 933.80)">2026-03-24 05:0...</text>
<text x="2033.71" y="933.80" text-anchor="end" font-size="14.75" fill="#fff" class="bt" transform="rotate(-45 2033.71 933.80)">2026-03-24 06:0...</text>
<text x="2062.58" y="933.80" text-anchor="end" font-size="14.75" fill="#fff" class="bt" transform="rotate(-45 2062.58 933.80)">2026-03-24 08:0...</text>
<text x="2091.45" y="933.80" text-anchor="end" font-size="14.75" fill="#fff" class="bt" transform="rotate(-45 2091.45 933.80)">2026-03-24 09:0...</text>
<text x="2120.32" y="933.80" text-anchor="end" font-size="14.75" fill="#fff" class="bt" transform="rotate(-45 2120.32 933.80)">2026-03-24 10:0...</text>
<text x="2149.18" y="933.80" text-anchor="end" font-size="14.75" fill="#fff" class="bt" transform="rotate(-45 2149.18 933.80)">2026-03-24 11:0...</text>
<text x="2178.05" y="933.80" text-anchor="end" font-size="14.75" fill="#fff" class="bt" transform="rotate(-45 2178.05 933.80)">2026-03-24 12:0...</text>
<text x="2206.92" y="933.80" text-anchor="end" font-size="14.75" fill="#fff" class="bt" transform="rotate(-45 2206.92 933.80)">2026-03-24 13:0...</text>
<text x="2235.79" y="933.80" text-anchor="end" font-size="14.75" fill="#fff" class="bt" transform="rotate(-45 2235.79 933.80)">2026-03-24 14:0...</text>
<text x="2264.66" y="933.80" text-anchor="end" font-size="14.75" fill="#fff" class="bt" transform="rotate(-45 2264.66 933.80)">2026-03-24 15:0...</text>
<text x="2293.52" y="933.80" text-anchor="end" font-size="14.75" fill="#fff" class="bt" transform="rotate(-45 2293.52 933.80)">2026-03-24 16:0...</text>
<text x="2322.39" y="933.80" text-anchor="end" font-size="14.75" fill="#fff" class="bt" transform="rotate(-45 2322.39 933.80)">2026-03-24 17:0...</text>
<text x="2351.26" y="933.80" text-anchor="end" font-size="14.75" fill="#fff" class="bt" transform="rotate(-45 2351.26 933.80)">2026-03-24 18:0...</text>
<text x="2380.13" y="933.80" text-anchor="end" font-size="14.75" fill="#fff" class="bt" transform="rotate(-45 2380.13 933.80)">2026-03-24 19:0...</text>
<text x="2409.00" y="933.80" text-anchor="end" font-size="14.75" fill="#fff" class="bt" transform="rotate(-45 2409.00 933.80)">2026-03-24 20:0...</text>
<text x="2437.86" y="933.80" text-anchor="end" font-size="14.75" fill="#fff" class="bt" transform="rotate(-45 2437.86 933.80)">2026-03-24 21:0...</text>
<text x="2466.73" y="933.80" text-anchor="end" font-size="14.75" fill="#fff" class="bt" transform="rotate(-45 2466.73 933.80)">2026-03-24 23:0...</text>
<text x="2495.60" y="933.80" text-anchor="end" font-size="14.75" fill="#fff" class="bt" transform="rotate(-45 2495.60 933.80)">2026-03-25 00:0...</text>
</g>
<rect x="247.5" y="1019" width="2249" height="23" fill="#40678a"/>
<rect x="247.5" y="1019" width="2249" height="1" fill="#4a7396"/>
<rect x="247.5" y="1041" width="2249" height="1" fill="#4a7396"/>
<rect x="247.20" y="1019" width="1.2" height="24" fill="#8f9aa6"/>
<rect x="244.80" y="1024.5" width="6" height="12.5" rx="1.5" fill="#40678a" stroke="#a7b0ba" stroke-width="1.2"/>
<rect x="2496.00" y="1019" width="1.2" height="24" fill="#8f9aa6"/>
<rect x="2493.60" y="1024.5" width="6" height="12.5" rx="1.5" fill="#40678a" stroke="#a7b0ba" stroke-width="1.2"/>
<text x="1347.5" y="1069.3" text-anchor="middle" font-size="22" fill="#fff" class="bt">Time</text>
</svg>
<div class="r" style="left:128px;top:1110px;width:699px;height:448px;background:#3d4f6b;"></div>
<div class="r" style="left:851px;top:1110px;width:819px;height:448px;background:#3d4f6b;"></div>
<div class="r" style="left:1694px;top:1110px;width:819px;height:448px;background:#3d4f6b;"></div>
<span class="t sk" style="left:139.50px;top:1133.22px;font-size:21px;color:#fff;">Top Channels</span>
<span class="t sk" style="left:862.50px;top:1133.52px;font-size:21px;color:#fff;">Top Live Programs</span>
<span class="t sk" style="left:1706.00px;top:1133.32px;font-size:21px;color:#fff;">Top VOD Assets</span>
<div class="r" style="left:140px;top:1212px;width:615px;height:37px;background:#45566f;"></div>
<div class="r" style="left:140px;top:1176px;width:616px;height:1px;background:#56667f;"></div>
<div class="r" style="left:140px;top:1212px;width:616px;height:1px;background:#56667f;"></div>
<div class="r" style="left:140px;top:1249px;width:616px;height:1px;background:#56667f;"></div>
<div class="r" style="left:140px;top:1287px;width:616px;height:1px;background:#56667f;"></div>
<div class="r" style="left:140px;top:1176px;width:1px;height:112px;background:#56667f;"></div>
<div class="r" style="left:598px;top:1176px;width:1px;height:112px;background:#56667f;"></div>
<div class="r" style="left:755px;top:1176px;width:1px;height:112px;background:#56667f;"></div>
<span class="t " style="left:154.50px;top:1185.62px;font-size:19px;color:#fff;font-weight:bold;letter-spacing:-0.9px;">Channel</span>
<span class="t " style="left:611.50px;top:1185.62px;font-size:19px;color:#fff;font-weight:bold;letter-spacing:-1.0px;">Session count</span>
<span class="t sk" style="left:152.50px;top:1222.12px;font-size:19px;color:#fff;letter-spacing:-1.2px;">VOD</span>
<span class="t sk" style="left:611.00px;top:1222.12px;font-size:19px;color:#fff;">281</span>
<span class="t sk" style="left:611.00px;top:1259.42px;font-size:19px;color:#fff;">0</span>
<span class="t " style="left:1227.50px;top:1508.76px;font-size:18px;color:#fff;font-weight:bold;letter-spacing:-0.4px;">No data</span>
<span class="t sk" style="left:1106.00px;top:1537.06px;font-size:18px;color:#fff;">There was no data found for the visual</span>
<div class="r" style="left:1707px;top:1212px;width:753px;height:37px;background:#45566f;"></div>
<div class="r" style="left:1707px;top:1287px;width:753px;height:38px;background:#45566f;"></div>
<div class="r" style="left:1707px;top:1362px;width:753px;height:38px;background:#45566f;"></div>
<div class="r" style="left:1707px;top:1438px;width:753px;height:38px;background:#45566f;"></div>
<div class="r" style="left:1707px;top:1513px;width:753px;height:38px;background:#45566f;"></div>
<div class="r" style="left:1707px;top:1176px;width:754px;height:1px;background:#56667f;"></div>
<div class="r" style="left:1707px;top:1212px;width:754px;height:1px;background:#56667f;"></div>
<div class="r" style="left:1707px;top:1249px;width:754px;height:1px;background:#56667f;"></div>
<div class="r" style="left:1707px;top:1287px;width:754px;height:1px;background:#56667f;"></div>
<div class="r" style="left:1707px;top:1325px;width:754px;height:1px;background:#56667f;"></div>
<div class="r" style="left:1707px;top:1362px;width:754px;height:1px;background:#56667f;"></div>
<div class="r" style="left:1707px;top:1400px;width:754px;height:1px;background:#56667f;"></div>
<div class="r" style="left:1707px;top:1438px;width:754px;height:1px;background:#56667f;"></div>
<div class="r" style="left:1707px;top:1476px;width:754px;height:1px;background:#56667f;"></div>
<div class="r" style="left:1707px;top:1513px;width:754px;height:1px;background:#56667f;"></div>
<div class="r" style="left:1707px;top:1551px;width:754px;height:1px;background:#56667f;"></div>
<div class="r" style="left:1707px;top:1589px;width:754px;height:1px;background:#56667f;"></div>
<div class="r" style="left:1707px;top:1176px;width:1px;height:383px;background:#56667f;"></div>
<div class="r" style="left:2311px;top:1176px;width:1px;height:383px;background:#56667f;"></div>
<div class="r" style="left:2460px;top:1176px;width:1px;height:383px;background:#56667f;"></div>
<span class="t " style="left:1720.50px;top:1185.42px;font-size:19px;color:#fff;font-weight:bold;letter-spacing:-0.9px;">Content</span>
<span class="t " style="left:2324.00px;top:1185.42px;font-size:19px;color:#fff;font-weight:bold;letter-spacing:-1.0px;">Session count</span>
<span class="t sk" style="left:1719.00px;top:1221.92px;font-size:19px;color:#fff;letter-spacing:-0.3px;">Episode 44</span>
<span class="t sk" style="left:2323.50px;top:1221.92px;font-size:19px;color:#fff;">14</span>
<span class="t sk" style="left:1719.00px;top:1259.62px;font-size:19px;color:#fff;letter-spacing:-0.3px;">Wonder Boy for President</span>
<span class="t sk" style="left:2323.50px;top:1259.62px;font-size:19px;color:#fff;">14</span>
<span class="t sk" style="left:1719.00px;top:1297.32px;font-size:19px;color:#fff;letter-spacing:-0.3px;">All the Money in the World</span>
<span class="t sk" style="left:2323.50px;top:1297.32px;font-size:19px;color:#fff;">12</span>
<span class="t sk" style="left:1719.00px;top:1335.02px;font-size:19px;color:#fff;letter-spacing:-0.3px;">Episode 45</span>
<span class="t sk" style="left:2323.50px;top:1335.02px;font-size:19px;color:#fff;">12</span>
<span class="t sk" style="left:1719.00px;top:1372.72px;font-size:19px;color:#fff;letter-spacing:-0.3px;">Episode 47</span>
<span class="t sk" style="left:2323.50px;top:1372.72px;font-size:19px;color:#fff;">11</span>
<span class="t sk" style="left:1719.00px;top:1410.42px;font-size:19px;color:#fff;letter-spacing:-0.3px;">Episode 1</span>
<span class="t sk" style="left:2323.50px;top:1410.42px;font-size:19px;color:#fff;">9</span>
<span class="t sk" style="left:1719.00px;top:1448.12px;font-size:19px;color:#fff;letter-spacing:-0.3px;">Finale</span>
<span class="t sk" style="left:2323.50px;top:1448.12px;font-size:19px;color:#fff;">9</span>
<span class="t sk" style="left:1719.00px;top:1485.82px;font-size:19px;color:#fff;letter-spacing:-0.3px;">Traffik</span>
<span class="t sk" style="left:2323.50px;top:1485.82px;font-size:19px;color:#fff;">8</span>
<span class="t sk" style="left:1719.00px;top:1523.52px;font-size:19px;color:#fff;letter-spacing:-0.3px;">Episode 46</span>
<span class="t sk" style="left:2323.50px;top:1523.52px;font-size:19px;color:#fff;">7</span>
<div class="r" style="left:2490px;top:1180px;width:8px;height:60px;background:#8d98a7;border-radius:4px;"></div>
<div class="r" style="left:2278px;top:1555px;width:282px;height:3px;background:#fff;"></div>
</div>
</body></html>
